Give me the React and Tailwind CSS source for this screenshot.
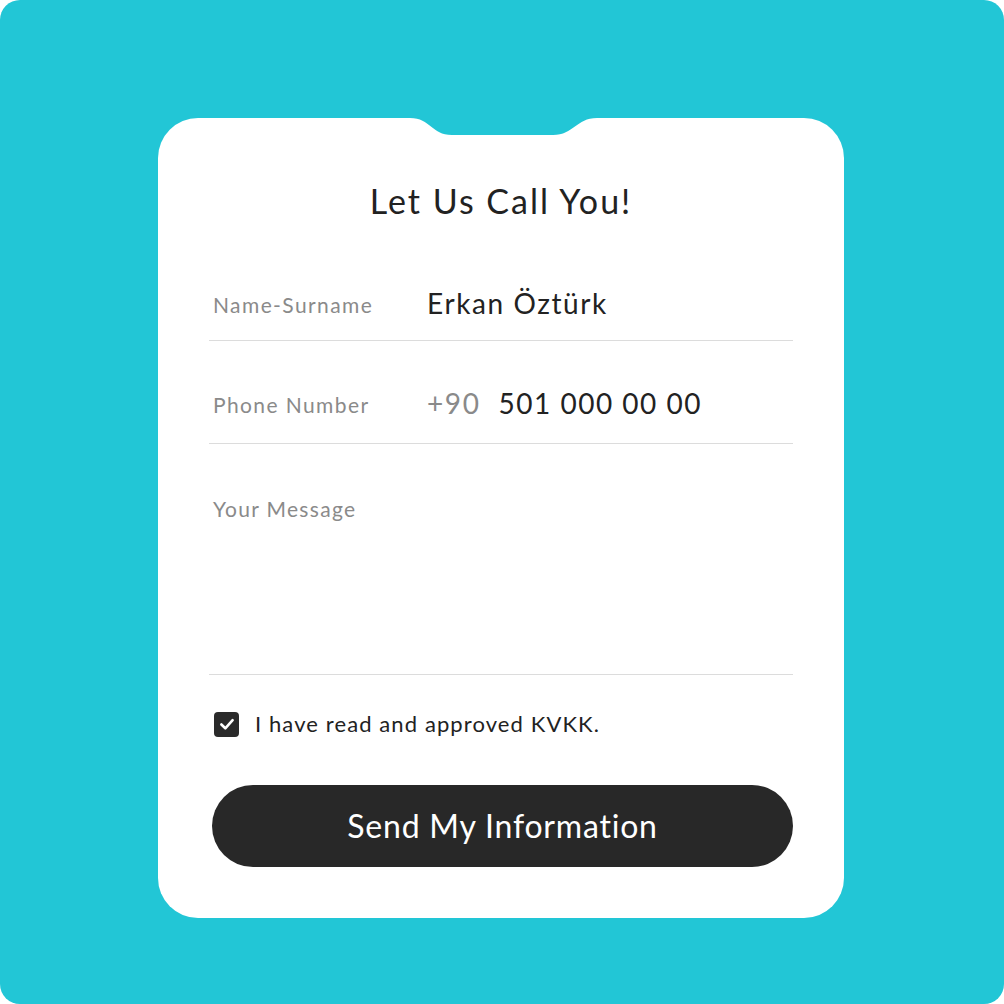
import { useState } from "react";

const Field = ({ label, children, className = "" }) => (
    <div className={`flex items-center border-b border-[#dcdcdc] ${className}`}>
        <span className="w-[215px] pl-1 pt-[3px] text-[21px] leading-[28px] tracking-[1.4px] text-[#8a8a8a]">{label}</span>
        <div className="flex items-center pl-[3px]">{children}</div>
    </div>
);

const App = () => {
    const [checked, setChecked] = useState(true);

    return (
        <div className="w-[1004px] h-[1004px] bg-white font-['Lato',sans-serif]">
            <div className="w-full h-full rounded-[20px] bg-[#22c6d6] pt-[118px] pl-[158px]">
                <div className="relative w-[686px] rounded-[40px] bg-white px-[51px] pt-[63px] pb-[51px]">
                    {/* notch at the top */}
                    <svg className="absolute left-0 top-0" width="686" height="18" viewBox="0 0 686 18">
                        <path d="M252 -1 L252 0 C273 0 273 17 294 17 L395 17 C416 17 418 0 439 0 L439 -1 Z" fill="#22c6d6" />
                    </svg>

                    <h1 className="text-center text-[34px] leading-[40px] tracking-[2px] text-[#222]">Let Us Call You!</h1>

                    <Field label="Name-Surname" className="mt-[62px] pb-[17px]">
                        <span className="text-[28px] leading-[40px] tracking-[1.6px] text-[#222]">Erkan Öztürk</span>
                    </Field>

                    <Field label="Phone Number" className="pt-[42px] pb-[20px]">
                        <span className="text-[28px] leading-[40px] tracking-[1.6px] text-[#8a8a8a]">+90</span>
                        <span className="ml-[18px] text-[28px] leading-[40px] tracking-[1.5px] text-[#222]">501 000 00 00</span>
                    </Field>

                    <div className="border-b border-[#dcdcdc] pt-[51px] h-[231px]">
                        <span className="pl-1 text-[21px] leading-[28px] tracking-[1.3px] text-[#8a8a8a]">Your Message</span>
                    </div>

                    <label className="mt-[36px] flex items-center gap-4 pl-[5px] cursor-pointer" onClick={() => setChecked(!checked)}>
                        <span className="flex h-[25px] w-[25px] items-center justify-center rounded-[4px] bg-[#2a2a2a]">
                            {checked && (
                                <svg width="18" height="18" viewBox="0 0 16 16" fill="none">
                                    <path d="M3 8.4 L6.5 11.8 L13 4.6" stroke="white" strokeWidth="2.3" strokeLinecap="round" strokeLinejoin="round" />
                                </svg>
                            )}
                        </span>
                        <span className="text-[22px] leading-[26px] tracking-[1.1px] text-[#222]">I have read and approved KVKK.</span>
                    </label>

                    <button className="mt-[48px] ml-[3px] h-[82px] w-[581px] rounded-full bg-[#282828] text-[32px] tracking-[0.8px] text-white">
                        Send My Information
                    </button>
                </div>
            </div>
        </div>
    );
};

export default App;
